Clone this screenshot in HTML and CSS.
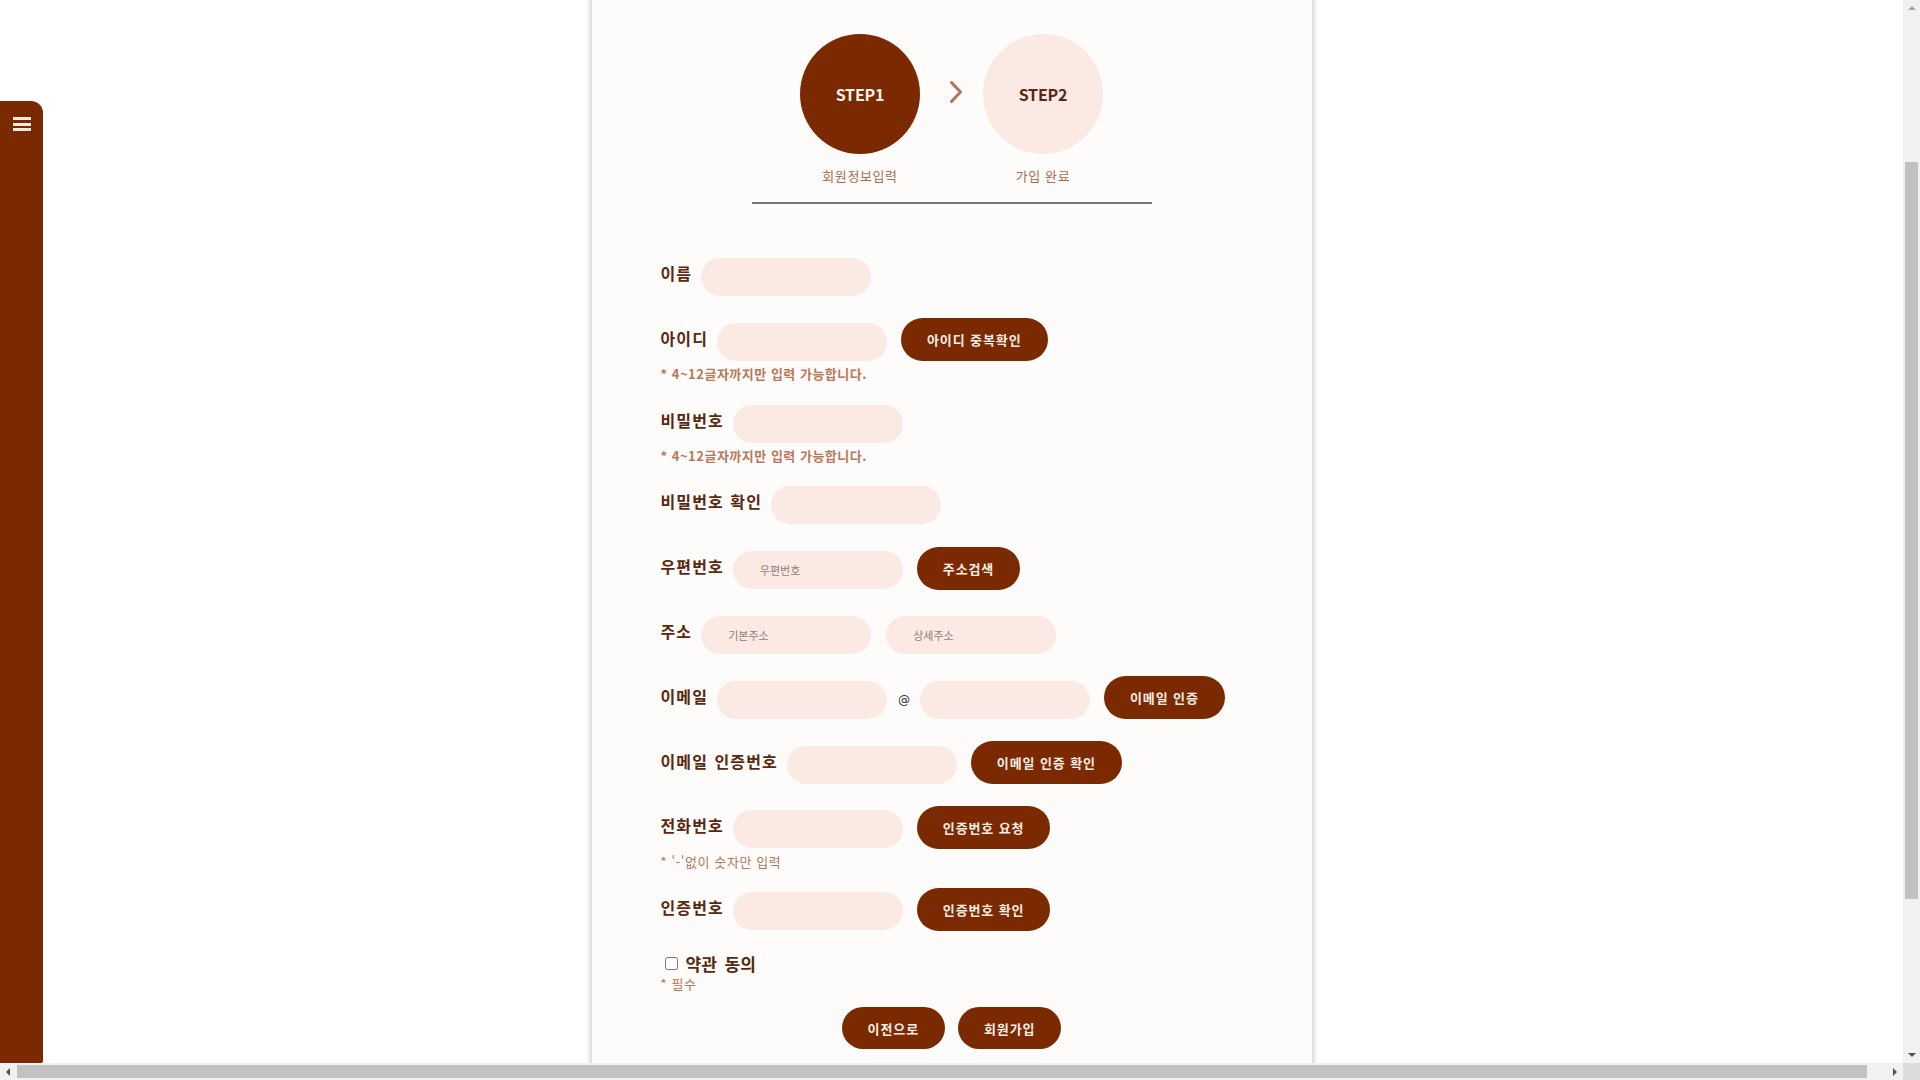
FILE: index.html
```html
<!DOCTYPE html>
<html lang="ko">
<head>
<meta charset="utf-8">
<title>회원가입</title>
<link rel="stylesheet" href="styles.css">
</head>
<body>
<div class="page">
  <div class="card">
    <div class="steps">
      <div class="step">
        <div class="circle circle-active">STEP1</div>
        <div class="step-label">회원정보입력</div>
      </div>
      <div class="chevron">
        <svg width="14" height="24" viewBox="0 0 14 24"><path d="M2.5 2.5 L11.5 12 L2.5 21.5" fill="none" stroke="#b4735a" stroke-width="3" stroke-linecap="round" stroke-linejoin="round"/></svg>
      </div>
      <div class="step">
        <div class="circle circle-next">STEP2</div>
        <div class="step-label">가입 완료</div>
      </div>
    </div>
    <div class="divider"></div>

    <form class="form">
      <div class="block">
        <div class="row"><span class="label">이름</span><input class="field" type="text"></div>
      </div>
      <div class="block">
        <div class="row"><span class="label">아이디</span><input class="field" type="text"><button type="button" class="btn">아이디 중복확인</button></div>
        <div class="hint hint-bold">* 4~12글자까지만 입력 가능합니다.</div>
      </div>
      <div class="block">
        <div class="row"><span class="label">비밀번호</span><input class="field" type="password"></div>
        <div class="hint hint-bold">* 4~12글자까지만 입력 가능합니다.</div>
      </div>
      <div class="block">
        <div class="row"><span class="label">비밀번호 확인</span><input class="field" type="password"></div>
      </div>
      <div class="block">
        <div class="row"><span class="label">우편번호</span><input class="field" type="text" placeholder="우편번호"><button type="button" class="btn">주소검색</button></div>
      </div>
      <div class="block">
        <div class="row"><span class="label">주소</span><input class="field" type="text" placeholder="기본주소"><input class="field field-gap" type="text" placeholder="상세주소"></div>
      </div>
      <div class="block">
        <div class="row"><span class="label">이메일</span><input class="field" type="text"><span class="at">@</span><input class="field" type="text"><button type="button" class="btn">이메일 인증</button></div>
      </div>
      <div class="block">
        <div class="row"><span class="label">이메일 인증번호</span><input class="field" type="text"><button type="button" class="btn">이메일 인증 확인</button></div>
      </div>
      <div class="block">
        <div class="row"><span class="label">전화번호</span><input class="field" type="text"><button type="button" class="btn">인증번호 요청</button></div>
        <div class="hint">* '-'없이 숫자만 입력</div>
      </div>
      <div class="block">
        <div class="row"><span class="label">인증번호</span><input class="field" type="text"><button type="button" class="btn">인증번호 확인</button></div>
      </div>

      <div class="terms">
        <input type="checkbox" class="check" id="agree"><label for="agree" class="terms-label">약관 동의</label>
      </div>
      <div class="hint hint-req">* 필수</div>

      <div class="actions">
        <button type="button" class="btn btn-action">이전으로</button>
        <button type="button" class="btn btn-action">회원가입</button>
      </div>
    </form>
  </div>
</div>

<nav class="sidebar">
  <div class="burger"><span></span><span></span><span></span></div>
</nav>

<div class="vscroll">
  <div class="arrow-up"></div>
  <div class="vthumb"></div>
  <div class="arrow-down"></div>
</div>
<div class="hscroll">
  <div class="arrow-left"></div>
  <div class="hthumb"></div>
  <div class="arrow-right"></div>
</div>
<div class="corner"></div>
</body>
</html>
```

FILE: styles.css
```css
* { box-sizing: border-box; }

html, body {
  margin: 0;
  padding: 0;
  background: #ffffff;
  overflow: hidden;
  font-family: "Noto Sans CJK KR", "Noto Sans", sans-serif;
}

.page {
  width: 1903px;
  height: 1063px;
  overflow: hidden;
  display: flex;
  justify-content: center;
}

.card {
  width: 720px;
  min-height: 1200px;
  margin-top: -20px;
  padding: 54px 69px 0;
  background: #fefcfb;
  box-shadow: 0 0 7px rgba(0, 0, 0, 0.3);
  flex-shrink: 0;
}

/* steps */
.steps {
  display: flex;
  justify-content: center;
  align-items: flex-start;
}

.step {
  width: 120px;
  display: flex;
  flex-direction: column;
  align-items: center;
}

.circle {
  width: 120px;
  height: 120px;
  border-radius: 50%;
  display: flex;
  align-items: center;
  justify-content: center;
  font-size: 16px;
  font-weight: 700;
  letter-spacing: -0.2px;
}

.circle-active {
  background: #7a2900;
  color: #fdf3ee;
}

.circle-next {
  background: #fbeae3;
  color: #5e2610;
}

.step-label {
  margin-top: 13px;
  font-size: 13px;
  line-height: 18px;
  color: #b06a4c;
  letter-spacing: 0.6px;
  white-space: nowrap;
}

.chevron {
  width: 63px;
  height: 120px;
  display: flex;
  align-items: center;
  justify-content: center;
  padding: 0 0 4px 9px;
}

.divider {
  width: 400px;
  height: 2px;
  background: #777777;
  margin: 17px auto 0;
}

/* form */
.form {
  margin-top: 51.5px;
}

.block + .block {
  margin-top: 21.8px;
}

.row {
  display: flex;
  align-items: center;
  height: 43px;
}

.label {
  font-size: 16px;
  font-weight: 700;
  color: #5a2810;
  margin-right: 9px;
  margin-bottom: 8px;
  letter-spacing: 1.1px;
  word-spacing: 1px;
  white-space: nowrap;
}

.field {
  width: 170px;
  height: 38px;
  border: none;
  border-radius: 19px;
  background: #fbeae3;
  padding: 0 0 0 27px;
  font-family: "Noto Sans CJK KR", sans-serif;
  font-size: 11px;
  color: #333;
  outline: none;
  flex-shrink: 0;
}

.field::placeholder {
  color: #8a7f7a;
}

.field-gap {
  margin-left: 15px;
}

.at {
  margin: 0 11px 0 11px;
  font-family: "DejaVu Sans", sans-serif;
  font-size: 12px;
  color: #333;
  width: 11px;
  text-align: center;
}

.btn {
  height: 43px;
  padding: 0 26px;
  border: none;
  border-radius: 22px;
  background: #7a2900;
  color: #fdeee6;
  font-family: "Noto Sans CJK KR", sans-serif;
  font-size: 13px;
  font-weight: 700;
  letter-spacing: 0.9px;
  margin-left: 14px;
  margin-bottom: 4px;
  white-space: nowrap;
  flex-shrink: 0;
  cursor: pointer;
}

.hint {
  margin-top: 4px;
  font-size: 13px;
  line-height: 13px;
  color: #b77656;
  letter-spacing: 0.6px;
  white-space: nowrap;
}

.hint-bold {
  font-weight: 700;
  color: #b9785a;
  letter-spacing: 0.5px;
}

.terms {
  margin-top: 20px;
  height: 22px;
  display: flex;
  align-items: center;
}

.check {
  width: 13px;
  height: 13px;
  margin: 0 0 0 4px;
}

.terms-label {
  margin-left: 8px;
  font-size: 17px;
  font-weight: 700;
  color: #5a2810;
  word-spacing: 3px;
}

.hint-req {
  margin-top: 0;
  line-height: 17px;
  font-size: 13px;
}

.actions {
  margin-top: 15.5px;
  display: flex;
  justify-content: center;
  align-items: flex-start;
  gap: 13px;
}

.btn-action {
  margin-left: 0;
  margin-bottom: 0;
  height: 42px;
  border-radius: 21px;
}

/* sidebar (fixed overlay) */
.sidebar {
  position: fixed;
  left: 0;
  top: 101px;
  width: 43px;
  height: 962px;
  background: #7a2900;
  border-top-right-radius: 12px;
  border-bottom-right-radius: 2px;
}

.burger {
  margin: 16px 0 0 13px;
  width: 18px;
  display: flex;
  flex-direction: column;
  gap: 2.5px;
}

.burger span {
  display: block;
  height: 3px;
  background: #fbeae3;
}

/* scrollbars (browser chrome overlay) */
.vscroll {
  position: fixed;
  right: 0;
  top: 0;
  width: 17px;
  height: 1063px;
  background: #f1f1f1;
}

.vthumb {
  position: absolute;
  left: 2px;
  top: 162px;
  width: 13px;
  height: 737px;
  background: #c1c1c1;
}

.arrow-up {
  position: absolute;
  left: 4.5px;
  top: 6px;
  width: 0;
  height: 0;
  border-left: 4px solid transparent;
  border-right: 4px solid transparent;
  border-bottom: 4px solid #a3a3a3;
}

.arrow-down {
  position: absolute;
  left: 4.5px;
  bottom: 6px;
  width: 0;
  height: 0;
  border-left: 4px solid transparent;
  border-right: 4px solid transparent;
  border-top: 4px solid #505050;
}

.hscroll {
  position: fixed;
  left: 0;
  bottom: 0;
  width: 1903px;
  height: 17px;
  background: #f1f1f1;
}

.hthumb {
  position: absolute;
  left: 17px;
  top: 2px;
  width: 1850px;
  height: 13px;
  background: #c1c1c1;
}

.arrow-left {
  position: absolute;
  left: 6px;
  top: 4.5px;
  width: 0;
  height: 0;
  border-top: 4px solid transparent;
  border-bottom: 4px solid transparent;
  border-right: 4px solid #505050;
}

.arrow-right {
  position: absolute;
  right: 6px;
  top: 4.5px;
  width: 0;
  height: 0;
  border-top: 4px solid transparent;
  border-bottom: 4px solid transparent;
  border-left: 4px solid #505050;
}

.corner {
  position: fixed;
  right: 0;
  bottom: 0;
  width: 17px;
  height: 17px;
  background: #dcdcdc;
}
```
